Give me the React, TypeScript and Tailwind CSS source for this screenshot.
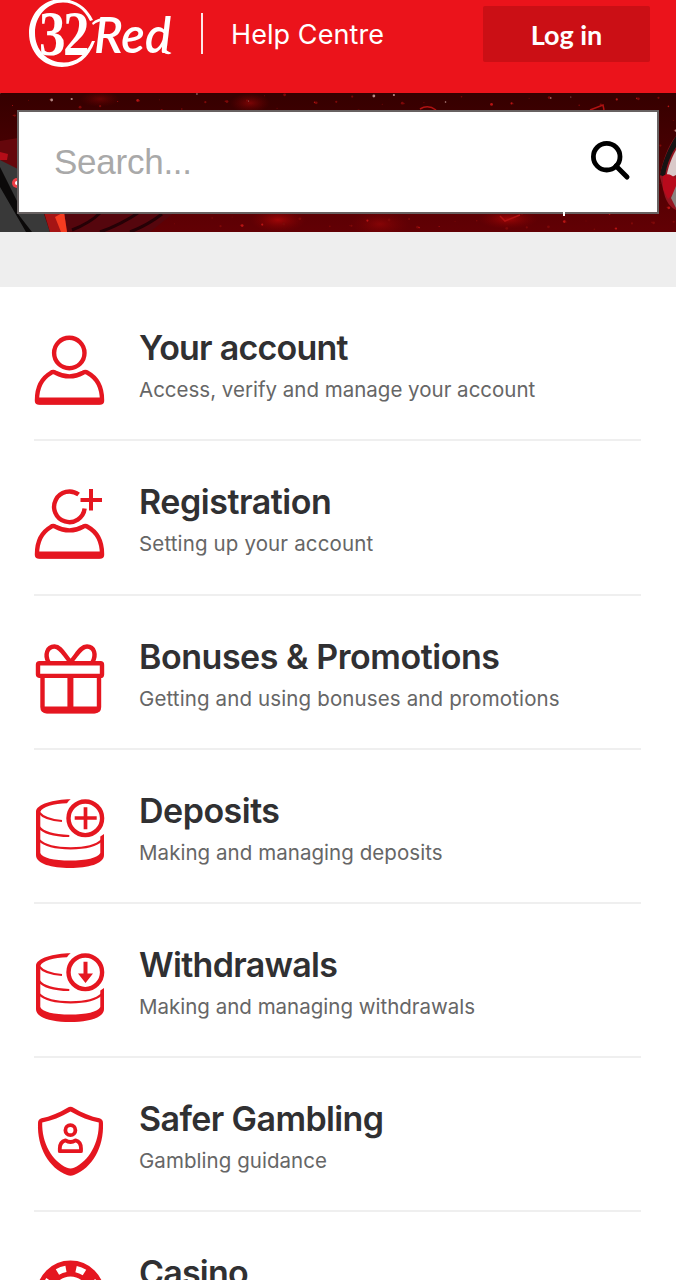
import type { ReactNode } from 'react';

interface Topic {
    title: string
    description?: string
    icon: ReactNode
    titleTracking: string
    textTracking?: string
}

const RED = '#e51620'

function Icon({ children }: { children: ReactNode }) {
    return (
        <svg width="72" height="72" viewBox="0 0 72 72" fill="none" stroke={RED} strokeWidth="4.4" className="shrink-0">
            {children}
        </svg>
    )
}

function Shoulders() {
    return (
        <>
            <path d="M3 65C3 53 8 43 17 37.8Q19 36.2 21.5 37.7C31 42.6 40 42.6 49 37.7Q51.5 36.2 53.5 37.8C63 43 68 53 68 65V66Q68 67.5 66 67.5H5Q3 67.5 3 66Z" strokeLinejoin="round" />
            <path d="M3 62.5H68V66Q68 69.5 65 69.5H6Q3 69.5 3 66Z" fill={RED} stroke="none" />
        </>
    )
}

function AccountIcon() {
    return (
        <Icon>
            <circle cx="35.3" cy="18" r="15.2" />
            <Shoulders />
        </Icon>
    )
}

function RegistrationIcon() {
    return (
        <Icon>
            <path d="M44.6 5.6A15.3 15.3 0 1 0 50.6 19.6" />
            <path d="M57 0V21.5M46.5 11H68" strokeWidth="4" />
            <Shoulders />
        </Icon>
    )
}

function GiftIcon() {
    return (
        <Icon>
            <path d="M14.5 18C10.5 11 13 2.5 20.5 2.5C27 2.5 30 11 36.5 18C43 11 46.5 2.5 53 2.5C60.5 2.5 62.5 11 58.5 18" />
            <rect x="4" y="19.3" width="64" height="12.6" rx="1.5" />
            <path d="M8.5 33V63Q8.5 67 13 67H60.5Q65 67 65 63V33" />
            <path d="M8 62.6H65V64Q65 69.5 60 69.5H13Q8 69.5 8 64Z" fill={RED} stroke="none" />
            <path d="M36.4 32V65" strokeWidth="6" />
        </Icon>
    )
}

function CoinsIcon({ children }: { children: ReactNode }) {
    return (
        <Icon>
            <path d="M36.7 1.3C20 1.6 2 6 2 14V57C2 66 18 70 36 70S70 66 70 57V36L66.3 38.5V55C64 60 52 62.6 36 62.6S8 60 6.3 55V14C8 8.5 20 5.5 33 5.2Q34.5 3 36.7 1.3Z" fill={RED} stroke="none" />
            <path d="M5 14.5C9 19.5 17 22.2 28 23M5 29C9 34.5 20 37.5 35.3 38M5 42C11 48 22 50.3 36.7 50.3S62 48 68 42" strokeWidth="2.2" />
            <circle cx="51.3" cy="20.3" r="16.8" />
            {children}
        </Icon>
    )
}

function ShieldIcon() {
    return (
        <Icon>
            <path d="M36.5 .8Q38 .8 40 2C48 7 57 10.5 65.5 12.3Q69 13.2 69 17C70 42 58 62 40 69Q36.5 70.6 33 69C15 62 3 42 4 17Q4 13.2 7.5 12.3C16 10.5 25 7 33 2Q35 .8 36.5 .8ZM36.5 5.5C27 11 17.5 14.7 8.2 16.5C7.7 37 18 55 33 61.8Q36.5 63.4 40 61.8C55 55 65.3 37 64.8 16.5C55.5 14.7 46 11 36.5 5.5Z" fill={RED} fillRule="evenodd" stroke="none" />
            <circle cx="36.4" cy="24.2" r="5" strokeWidth="3.8" />
            <path d="M25.8 45.2V42.5C25.8 38.5 28 35.2 31.5 34.3C34.5 36.3 38.5 36.3 41.5 34.3C45 35.2 47 38.5 47 42.5V45.2Z" strokeWidth="3.8" strokeLinejoin="round" />
        </Icon>
    )
}

function ChipIcon() {
    return (
        <Icon>
            <circle cx="36.5" cy="34.5" r="26" strokeWidth="16" />
            <circle cx="36.5" cy="34.5" r="26" stroke="#fff" strokeWidth="6.5" strokeDasharray="9 11.42" strokeDashoffset="-5.7" transform="rotate(-90 36.5 34.5)" />
        </Icon>
    )
}

const topics: Topic[] = [
    {
        title: 'Your account',
        description: 'Access, verify and manage your account',
        icon: <AccountIcon />,
        titleTracking: 'tracking-[-0.77px]',
        textTracking: 'tracking-[0px]',
    },
    {
        title: 'Registration',
        description: 'Setting up your account',
        icon: <RegistrationIcon />,
        titleTracking: 'tracking-[-0.45px]',
        textTracking: 'tracking-[0.14px]',
    },
    {
        title: 'Bonuses & Promotions',
        description: 'Getting and using bonuses and promotions',
        icon: <GiftIcon />,
        titleTracking: 'tracking-[-0.46px]',
        textTracking: 'tracking-[0.13px]',
    },
    {
        title: 'Deposits',
        description: 'Making and managing deposits',
        icon: <CoinsIcon><path d="M40.7 20H62.7M51.5 9.3V31.3" strokeWidth="3.7" /></CoinsIcon>,
        titleTracking: 'tracking-[-0.5px]',
        textTracking: 'tracking-[0.05px]',
    },
    {
        title: 'Withdrawals',
        description: 'Making and managing withdrawals',
        icon: <CoinsIcon><path d="M49.5 9.7H53.5V21.5H59L51.5 31L44 21.5H49.5Z" fill={RED} stroke="none" /></CoinsIcon>,
        titleTracking: 'tracking-[-0.7px]',
        textTracking: 'tracking-[0px]',
    },
    {
        title: 'Safer Gambling',
        description: 'Gambling guidance',
        icon: <ShieldIcon />,
        titleTracking: 'tracking-[-0.6px]',
        textTracking: 'tracking-[0.05px]',
    },
    {
        title: 'Casino',
        icon: <ChipIcon />,
        titleTracking: 'tracking-[-0.8px]',
    },
]

function Logo() {
    return (
        <svg width="146" height="68" viewBox="28 0 146 68" fill="#fff" className="shrink-0">
            <path d="M93 20C87 7 75-1 61.5-1C43-1 29 14 29 33S43 67 62 67C77 67 89 58 95 41L92 41C86 55 76 62.5 64 62.5C47 62.5 35 50 35 33S47 2.5 63 2.5C75 2.5 84 9 90 21Z" />
            <text x="39" y="54.5" fontFamily="Liberation Serif, serif" fontWeight="700" fontSize="63" letterSpacing="-3" textLength="48" lengthAdjust="spacingAndGlyphs">32</text>
            <text x="94" y="53" fontFamily="Lato, sans-serif" fontStyle="italic" fontWeight="600" fontSize="49" textLength="77" lengthAdjust="spacingAndGlyphs">Red</text>
            <path d="M92 23Q98 17 108 17.5L107 20.5Q99 20 93 25Z" />
            <path d="M162 46Q166 51 171.500 53Q168 56 163 52Z" />
        </svg>
    )
}

// small repeatable scatter for the sparks behind the search box
const sparks = Array.from({ length: 420 }, (_, i) => ({
    x: (i * 137.51 + (i % 7) * 31) % 676,
    y: (i * 61.8 + (i % 5) * 17) % 139,
    r: 0.5 + (i % 4) * 0.3,
    color: i % 9 === 0 ? '#b98a86' : i % 3 === 0 ? '#b81414' : '#7d0808',
}))

function Backdrop() {
    return (
        <svg className="absolute inset-0" width="676" height="139" viewBox="0 0 676 139">
            <defs>
                <linearGradient id="night" x1="0" y1="0" x2="0" y2="1">
                    <stop offset="0" stopColor="#350000" />
                    <stop offset="1" stopColor="#620004" />
                </linearGradient>
                <radialGradient id="glow">
                    <stop offset="0" stopColor="#b00808" stopOpacity=".8" />
                    <stop offset="1" stopColor="#800000" stopOpacity="0" />
                </radialGradient>
            </defs>
            <rect width="676" height="139" fill="url(#night)" />
            <ellipse cx="250" cy="10" rx="20" ry="10" fill="url(#glow)" opacity=".7" />
            <ellipse cx="100" cy="6" rx="20" ry="8" fill="url(#glow)" opacity=".5" />
            <ellipse cx="278" cy="127" rx="28" ry="12" fill="url(#glow)" />
            <ellipse cx="380" cy="131" rx="30" ry="14" fill="url(#glow)" opacity=".6" />
            <ellipse cx="508" cy="126" rx="30" ry="10" fill="url(#glow)" />
            {sparks.map((s, i) => (
                <circle key={i} cx={s.x} cy={s.y} r={s.r} fill={s.color} />
            ))}
            <path d="M420 16Q428 11 436 17M590 17L603 12L604 17M500 123L505 128L520 122" stroke="#b01212" strokeWidth="1.5" fill="none" />
            <path d="M0 48L18 45V80L0 68Z" fill="#65070b" />
            <path d="M0 59L8 61L7 67H0Z" fill="#b50d18" />
            <path d="M0 67L18 76V121H44L50 139H0Z" fill="#393939" />
            <path d="M0 74L18 110V121L32 139H26L0 94Z" fill="#0b0909" />
            <circle cx="17" cy="90" r="5" fill="#ef3e45" />
            <circle cx="17" cy="90" r="2" fill="#fff" />
            <path d="M44 119H175L150 139H50Z" fill="#55060d" />
            <path d="M72 137Q90 130 100 120M100 139Q120 132 138 120M130 139Q148 132 162 121" stroke="#250106" strokeWidth="3" fill="none" />
            <path d="M44 119H64L67 139H50Z" fill="#a51414" />
            <path d="M55 124L64 119L67 139H61Z" fill="#f53c20" />
            <path d="M676 43C668 52 661 72 660 84L664 100C666 109 671 115 676 117Z" fill="#941520" />
            <path d="M676 43C669 53 662 70 660 82L665 84C667 69 672 60 676 54Z" fill="#171313" />
            <path d="M676 57C670 68 667 78 666 87L676 82Z" fill="#d9c9c9" />
            <path d="M663 83C667 80 671 81 676 86V98L668 106L663 96Z" fill="#b80a1c" />
            <path d="M676 93L671 105L676 115Z" fill="#8d8280" />
        </svg>
    )
}

function Header() {
    return (
        <header className="flex h-[93px] items-start bg-[#eb131b] pl-7 pr-[26px] text-white">
            <Logo />
            <div className="ml-[27px] mt-[13px] h-[41px] w-[2px] bg-white/90" />
            <span className="ml-7 mt-[19px] text-[27px] leading-8 tracking-[0.08px]">Help Centre</span>
            <button type="button" className="ml-auto mt-[6px] h-[56px] w-[167px] rounded-xs bg-[#cb0f15] pt-0.5 font-[Lato,sans-serif] text-[27px] font-bold">
                Log in
            </button>
        </header>
    )
}

function SearchBanner() {
    return (
        <section className="relative h-[139px] overflow-hidden px-[17px] pt-[17px]">
            <Backdrop />
            <div className="relative flex h-[104px] items-center border-2 border-[#686262] bg-white pl-[35px] pr-[26px]">
                <input
                    type="text"
                    placeholder="Search..."
                    className="min-w-0 flex-1 font-['Liberation_Sans',sans-serif] text-[35px] tracking-[-0.25px] outline-none placeholder:text-[#a9a9a9]"
                />
                <svg width="42" height="42" viewBox="0 0 42 42" fill="none" stroke="#000" strokeWidth="4.8" className="-mt-1 shrink-0">
                    <circle cx="17.7" cy="17.7" r="13.3" />
                    <path d="M27 27L38 38" strokeWidth="5" strokeLinecap="round" />
                </svg>
                <span className="absolute -bottom-[4px] left-[544px] h-[5px] w-[2px] bg-white" />
            </div>
        </section>
    )
}

function TopicRow({ topic }: { topic: Topic }) {
    return (
        <li className="flex h-[154.2px] items-start border-b-2 border-[#efefef] pt-12">
            {topic.icon}
            <div className="ml-[33px] -mt-[8px]">
                <h2 className={`whitespace-nowrap text-[34px] font-semibold leading-[42px] text-[#303032] ${topic.titleTracking}`}>{topic.title}</h2>
                {topic.description && (
                    <p className={`mt-2 whitespace-nowrap text-[20.5px] leading-[26px] text-[#666] ${topic.textTracking}`}>{topic.description}</p>
                )}
            </div>
        </li>
    )
}

export default function App() {
    return (
        <div className="h-screen overflow-hidden bg-white font-[Inter,sans-serif]">
            <Header />
            <SearchBanner />
            <div className="h-[55.25px] bg-[#eee]" />
            <ul className="pl-[34px] pr-[35px]">
                {topics.map((topic) => (
                    <TopicRow key={topic.title} topic={topic} />
                ))}
            </ul>
        </div>
    )
}
